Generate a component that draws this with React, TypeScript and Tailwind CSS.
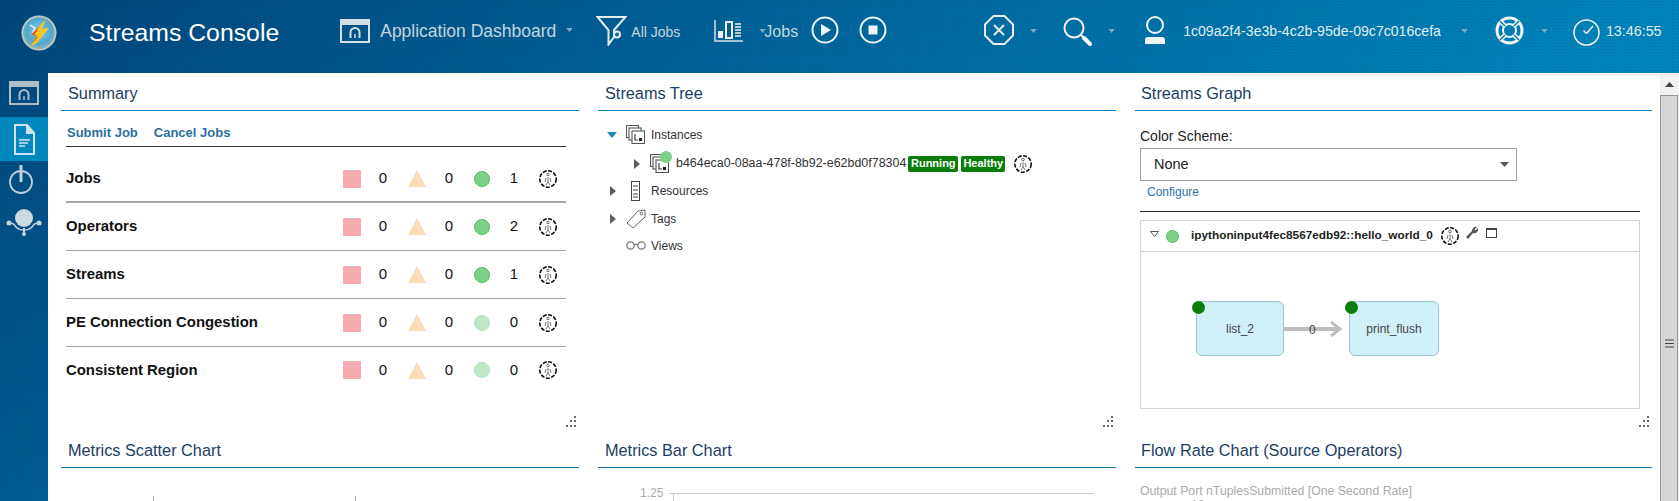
import React from "react";

const Caret = ({ className = "" }: { className?: string }) => (
  <svg width="7" height="4" viewBox="0 0 8 5" className={className}>
    <path d="M0 0H8L4 5Z" fill="#7fa9c4" />
  </svg>
);

const DashIcon = ({ w = 30, h = 24, c = "#d5e0e6" }: { w?: number; h?: number; c?: string }) => (
  <svg width={w} height={h} viewBox="0 0 30 24" fill="none">
    <rect x="1" y="1" width="28" height="22" stroke={c} strokeWidth="2" />
    <rect x="1" y="1" width="28" height="5" fill={c} />
    <path d="M10.5 19v-5.5a4.5 4.5 0 0 1 9 0V19" stroke={c} strokeWidth="2" />
    <path d="M15 19v-4" stroke={c} strokeWidth="1.5" />
  </svg>
);

const Logo = () => (
  <svg width="36" height="36" viewBox="0 0 36 36">
    <defs>
      <radialGradient id="lg" cx="50%" cy="45%" r="55%">
        <stop offset="0%" stopColor="#7fd0ee" />
        <stop offset="65%" stopColor="#4fa8cf" />
        <stop offset="100%" stopColor="#a9b8ae" />
      </radialGradient>
    </defs>
    <circle cx="18" cy="18" r="17.5" fill="url(#lg)" />
    <circle cx="18" cy="18" r="16.5" fill="none" stroke="#c3c9b8" strokeWidth="1.5" />
    <path d="M9 10l5 3-2 4 5 1-2 5" stroke="#dff1f7" strokeWidth="1.5" fill="none" />
    <path d="M25 4L10 20l6 0-6 11 6-3 12-15-7 1z" fill="#f7c81f" />
    <path d="M19 10L10 20l6 0-5 9 6-7-4-1z" fill="#ee5a24" />
  </svg>
);

const FilterIcon = () => (
  <svg width="31" height="31" viewBox="0 0 31 31" fill="none" stroke="#e6eef2" strokeWidth="2">
    <path d="M1.5 2h28L18 15v7l-5.500 7.500V15z" />
    <circle cx="21" cy="19.500" r="3" fill="#0a6c9c" />
  </svg>
);

const BarsIcon = () => (
  <svg width="29" height="22" viewBox="0 0 29 22">
    <path d="M1 0v21h28" stroke="#d5e0e6" strokeWidth="1.500" fill="none" />
    <rect x="4" y="11" width="5" height="7" fill="#eef4f7" />
    <rect x="12" y="2" width="6" height="16" fill="none" stroke="#eef4f7" strokeWidth="2" />
    <path d="M21 4h6M21 7h6M21 10h6M21 13h6M21 16h6" stroke="#b7cbd6" strokeWidth="2" />
  </svg>
);

const PlayIcon = () => (
  <svg width="28" height="28" viewBox="0 0 28 28" fill="none">
    <circle cx="14" cy="14" r="12.500" stroke="#eef4f7" strokeWidth="2" />
    <path d="M10 8l10 6-10 6z" fill="#eef4f7" />
  </svg>
);

const StopIcon = () => (
  <svg width="28" height="28" viewBox="0 0 28 28" fill="none">
    <circle cx="14" cy="14" r="12.500" stroke="#eef4f7" strokeWidth="2" />
    <rect x="9.500" y="9.500" width="9" height="9" fill="#eef4f7" />
  </svg>
);

const OctIcon = () => (
  <svg width="30" height="30" viewBox="0 0 30 30" fill="none" stroke="#e6eef2" strokeWidth="2">
    <path d="M9.500 1h11L29 9.500v11L20.500 29h-11L1 20.500v-11z" />
    <path d="M10 10l10 10M20 10L10 20" />
  </svg>
);

const SearchIcon = () => (
  <svg width="30" height="29" viewBox="0 0 30 29" fill="none" stroke="#f0f5f7">
    <circle cx="11" cy="11" r="9.500" strokeWidth="2" />
    <path d="M18 18l3 3" strokeWidth="2" />
    <path d="M21 21l6 6" strokeWidth="4" strokeLinecap="round" />
  </svg>
);

const UserIcon = () => (
  <svg width="24" height="29" viewBox="0 0 24 29" fill="none">
    <circle cx="12" cy="9" r="8" stroke="#f0f5f7" strokeWidth="2" />
    <path d="M2 28v-4a3 3 0 0 1 3-3h14a3 3 0 0 1 3 3v4z" fill="#f0f5f7" />
  </svg>
);

const LifeIcon = () => (
  <svg width="29" height="29" viewBox="0 0 29 29" fill="none">
    <circle cx="14.500" cy="14.500" r="12.500" strokeWidth="3" stroke="#f0f5f7" />
    <circle cx="14.500" cy="14.500" r="6.500" strokeWidth="2" stroke="#f0f5f7" />
    <path d="M5.500 5.500l4.500 4.500M23.500 5.500L19 10M5.500 23.500L10 19M23.500 23.500L19 19" strokeWidth="4.500" stroke="#f0f5f7" />
    <path d="M5 5l5 5M24 5l-5 5M5 24l5-5M24 24l-5-5" strokeWidth="1.500" stroke="#0a80b2" />
  </svg>
);

const ClockIcon = () => (
  <svg width="27" height="27" viewBox="0 0 27 27" fill="none" stroke="#e6eef2" strokeWidth="1.600">
    <circle cx="13.500" cy="13.500" r="12.500" />
    <path d="M13.500 14.500l-3-3M13.500 14.500L20 7" />
  </svg>
);

const DocIcon = () => (
  <svg width="21" height="31" viewBox="0 0 21 31" fill="none" stroke="#cfe3ee" strokeWidth="2">
    <path d="M1 1h12l7 8v21H1z" />
    <path d="M13 1v8h7" fill="#cfe3ee" />
    <path d="M5 16h11M5 19h9M5 22h6" strokeWidth="1.500" />
  </svg>
);

const PowerIcon = () => (
  <svg width="24" height="29" viewBox="0 0 24 29" fill="none" stroke="#bcced8">
    <circle cx="12" cy="17" r="11" strokeWidth="1.800" />
    <path d="M12 0v17" strokeWidth="3" />
  </svg>
);

const OrbIcon = () => (
  <svg width="36" height="28" viewBox="0 0 36 28" fill="none">
    <circle cx="18" cy="10" r="9" fill="#cdd9e0" />
    <path d="M3 15c4 0 5 1 7 4 2 2 5 3 8 3s6-1 8-3c2-3 3-4 7-4" stroke="#c4d2da" strokeWidth="1.500" />
    <circle cx="3" cy="15" r="2.500" fill="#c4d2da" />
    <circle cx="33" cy="15" r="2.500" fill="#c4d2da" />
    <path d="M18 20v6" stroke="#c4d2da" strokeWidth="2" />
    <circle cx="18" cy="26" r="2" fill="#c4d2da" />
  </svg>
);

const Info = () => (
  <svg width="18" height="18" viewBox="0 0 18 18" fill="none" className="shrink-0">
    <circle cx="9" cy="9" r="8.200" stroke="#111" strokeWidth="1.600" strokeDasharray="4 1.500" />
    <circle cx="9" cy="4.500" r="1.300" stroke="#444" strokeWidth=".8" />
    <path d="M9 7v4.500M7 8l-1 4M11 8l1 4M9 11.500l-2 3.500M9 11.500l2 3.500" stroke="#666" strokeWidth=".9" />
  </svg>
);

const Sq = () => <div className="w-[18px] h-[18px] bg-[#f5abb0]" />;
const Tri = () => (
  <svg width="18" height="17" viewBox="0 0 18 17">
    <path d="M9 0L18 17H0Z" fill="#fcdcb8" />
  </svg>
);
const Dot = ({ on }: { on: boolean }) => (
  <div
    className={
      on
        ? "w-4 h-4 rounded-full bg-[#7ed189] border border-[#4dbb62]"
        : "w-4 h-4 rounded-full bg-[#c0e8c8] border border-[#b0e0bb]"
    }
  />
);

const StackIcon = () => (
  <svg width="19" height="19" viewBox="0 0 19 19" fill="#fff" stroke="#555" strokeWidth="1.100">
    <rect x="0.500" y="0.500" width="12" height="12" />
    <rect x="3" y="3" width="12" height="12" />
    <rect x="6" y="6" width="12.500" height="12.500" />
    <path d="M9 9v6h3" stroke="#333" fill="none" />
    <rect x="13" y="13" width="3" height="3" fill="#222" stroke="none" />
  </svg>
);

const Tri2 = ({ c = "#5d5d5d" }: { c?: string }) => (
  <svg width="6" height="10" viewBox="0 0 6 10">
    <path d="M0 0L6 5L0 10Z" fill={c} />
  </svg>
);

const Grip = () => (
  <svg width="12" height="12" viewBox="0 0 12 12" fill="#666" className="absolute right-[2px] bottom-[2px]">
    <rect x="9" y="0" width="2" height="2" />
    <rect x="5" y="4" width="2" height="2" />
    <rect x="9" y="4" width="2" height="2" />
    <rect x="1" y="9" width="2" height="2" />
    <rect x="5" y="9" width="2" height="2" />
    <rect x="9" y="9" width="2" height="2" />
  </svg>
);

const Panel = ({ title, line = "border-[#0085c0]", pad = "pl-[7px]", children, grip = true }: { title: string; line?: string; pad?: string; children?: React.ReactNode; grip?: boolean }) => (
  <section className="relative h-[357px]">
    <div className={`h-[38px] border-b flex items-center pt-[3px] text-[16.300px] text-[#1b3d63] ${pad} ${line}`}>{title}</div>
    {children}
    {grip && <Grip />}
  </section>
);

const rows = [
  { name: "Jobs", n: 1, on: true, cls: "h-[56px] pt-[9px] border-b-2 border-[#ada6a6]" },
  { name: "Operators", n: 2, on: true, cls: "h-[48px] border-b border-[#a3aea3]" },
  { name: "Streams", n: 1, on: true, cls: "h-[48px] border-b border-[#a3aea3]" },
  { name: "PE Connection Congestion", n: 0, on: false, cls: "h-[48px] border-b border-[#a3aea3]" },
  { name: "Consistent Region", n: 0, on: false, cls: "h-[46px]" },
];

const Node = ({ label, className }: { label: string; className: string }) => (
  <div className={`absolute h-[55px] rounded-[6px] border border-[#9cc4d0] bg-[#d0f1f8] flex items-center justify-center text-[12px] text-[#444] ${className}`}>
    <span className="absolute -left-[5px] -top-px w-[13px] h-[13px] rounded-full bg-[#0a7d0a]" />
    {label}
  </div>
);

export default function App() {
  return (
    <div className="w-[1679px] h-[501px] overflow-hidden flex flex-col font-['Liberation_Sans',Arial,sans-serif] bg-[radial-gradient(rgba(0,0,0,0.10)_1px,transparent_1px),linear-gradient(140deg,#00457b_0%,#0083b9_73%,#0088bf_100%)] [background-size:3px_3px,100%_100%]">
      <header className="h-[73px] shrink-0 flex items-center text-[#c3d5df]">
        <div className="ml-[21px] -mt-[7px]"><Logo /></div>
        <div className="ml-[32px] -mt-[8px] text-[24.800px] text-white whitespace-nowrap">Streams Console</div>
        <div className="ml-[61px] -mt-[11px]"><DashIcon /></div>
        <div className="ml-[10px] -mt-[11px] text-[17.500px] whitespace-nowrap">Application Dashboard</div>
        <Caret className="ml-[10px] -mt-[13px]" />
        <div className="ml-[23px] -mt-[13px]"><FilterIcon /></div>
        <div className="ml-[4px] -mt-[9px] text-[14px] whitespace-nowrap">All Jobs</div>
        <div className="ml-[34px] -mt-[11px]"><BarsIcon /></div>
        <Caret className="ml-[16px] -mt-[11px]" />
        <div className="-ml-[2px] -mt-[9px] text-[16px] whitespace-nowrap">Jobs</div>
        <div className="ml-[13px] -mt-[13px]"><PlayIcon /></div>
        <div className="ml-[20px] -mt-[13px]"><StopIcon /></div>
        <div className="ml-[97px] -mt-[13px]"><OctIcon /></div>
        <Caret className="ml-[16px] -mt-[11px]" />
        <div className="ml-[26px] -mt-[11px]"><SearchIcon /></div>
        <Caret className="ml-[15px] -mt-[11px]" />
        <div className="ml-[28px] -mt-[13px]"><UserIcon /></div>
        <div className="ml-[16px] -mt-[10px] text-[14.100px] text-[#e3edf2] whitespace-nowrap">1c09a2f4-3e3b-4c2b-95de-09c7c016cefa</div>
        <Caret className="ml-[20px] -mt-[11px]" />
        <div className="ml-[27px] -mt-[13px]"><LifeIcon /></div>
        <Caret className="ml-[17px] -mt-[11px]" />
        <div className="ml-[25px] -mt-[9px]"><ClockIcon /></div>
        <div className="ml-[6px] -mt-[9px] text-[14.300px] text-[#e3edf2] whitespace-nowrap">13:46:55</div>
      </header>

      <div className="flex-1 min-h-0 flex">
        <nav className="w-[48px] shrink-0 flex flex-col items-center">
          <div className="h-[44px] w-full flex items-center justify-center pb-[5px]"><DashIcon c="#aebcc4" /></div>
          <div className="h-[44px] w-full flex items-center justify-center bg-[#0087bd]"><DocIcon /></div>
          <div className="h-[33px] w-full flex items-end justify-center pr-[6px]"><PowerIcon /></div>
          <div className="h-[56px] w-full flex items-center justify-center pr-[1px]"><OrbIcon /></div>
        </nav>

        <main className="w-[1612px] shrink-0 bg-white pl-[13px] pr-[8px] overflow-hidden grid grid-cols-[518px_518px_517px] gap-x-[19px] content-start">
          <Panel title="Summary">
            <div className="pl-[5px] pr-[13px]">
              <div className="h-[36px] pl-px pt-[8px] flex items-center gap-[16px] border-b border-[#333] text-[13px] font-bold text-[#2c6f9e]">
                <span>Submit Job</span>
                <span>Cancel Jobs</span>
              </div>
              {rows.map((r) => (
                <div key={r.name} className={`grid grid-cols-[277px_18px_44px_24px_40px_26px_38px_30px] items-center justify-items-center text-[15px] text-[#111] ${r.cls}`}>
                  <div className="justify-self-start font-bold whitespace-nowrap text-[14.900px]">{r.name}</div>
                  <Sq />
                  <span>0</span>
                  <Tri />
                  <span>0</span>
                  <Dot on={r.on} />
                  <span>{r.n}</span>
                  <Info />
                </div>
              ))}
            </div>
          </Panel>

          <Panel title="Streams Tree">
            <div className="pt-[10px] text-[12px] text-[#333]">
              <div className="h-[27px] flex items-center pl-[9px]">
                <svg width="10" height="6" viewBox="0 0 10 6"><path d="M0 0H10L5 6Z" fill="#1f86b5" /></svg>
                <span className="ml-[9px]"><StackIcon /></span>
                <span className="ml-[6px]">Instances</span>
              </div>
              <div className="mt-[2px] h-[27px] flex items-center pl-[36px]">
                <Tri2 />
                <span className="relative ml-[10px]">
                  <StackIcon />
                  <span className="absolute -top-[3px] left-[10px] w-[12px] h-[12px] rounded-full bg-[#7ed189]" />
                </span>
                <span className="ml-[7px] text-[12.450px] whitespace-nowrap">b464eca0-08aa-478f-8b92-e62bd0f78304</span>
                <span className="ml-[2px] w-[50px] h-[16px] rounded-[2px] bg-[#0a7d0a] text-white font-bold text-[11px] flex items-center justify-center">Running</span>
                <span className="ml-[3px] w-[44px] h-[16px] rounded-[2px] bg-[#0a7d0a] text-white font-bold text-[11px] flex items-center justify-center">Healthy</span>
                <span className="ml-[9px]"><Info /></span>
              </div>
              <div className="h-[27px] flex items-center pl-[12px]">
                <Tri2 />
                <svg width="9" height="20" viewBox="0 0 9 20" fill="none" stroke="#444" className="ml-[15px]">
                  <rect x="0.500" y="0.500" width="8" height="19" />
                  <path d="M2 5h5M2 9h5M2 13h5M2 16h5" />
                </svg>
                <span className="ml-[11px]">Resources</span>
              </div>
              <div className="mt-px h-[27px] flex items-center pl-[12px]">
                <Tri2 />
                <svg width="20" height="20" viewBox="0 0 20 20" fill="none" stroke="#666" className="ml-[10px]">
                  <path d="M1 14L12 2l7-1 0 7L7 19z" />
                  <circle cx="15.500" cy="4.500" r="1.300" />
                </svg>
                <span className="ml-[5px]">Tags</span>
              </div>
              <div className="h-[27px] flex items-center pl-[28px]">
                <svg width="20" height="9" viewBox="0 0 20 9" fill="none" stroke="#777" strokeWidth="1.300">
                  <circle cx="4.500" cy="4.500" r="3.700" />
                  <circle cx="15.500" cy="4.500" r="3.700" />
                  <path d="M8 3.500h4" />
                </svg>
                <span className="ml-[5px]">Views</span>
              </div>
            </div>
          </Panel>

          <Panel title="Streams Graph" pad="pl-[6px]">
            <div className="pl-[5px] pr-[12px]">
              <div className="mt-[15px] h-[20px] flex items-center text-[14px] text-[#222]">Color Scheme:</div>
              <div className="mt-[2px] w-[377px] h-[33px] border border-[#98a69a] flex items-center justify-between pl-[13px] pr-[7px] text-[14.500px] text-[#222]">
                <span>None</span>
                <svg width="9" height="5" viewBox="0 0 9 5"><path d="M0 0H9L4.500 5Z" fill="#555" /></svg>
              </div>
              <div className="mt-[2px] h-[17px] pl-[7px] flex items-center text-[12px] text-[#2c74aa]">Configure</div>
              <div className="mt-[11px] border-b border-[#222]" />
              <div className="mt-[8px] h-[189px] border border-[#cfd3cf]">
                <div className="h-[31px] border-b border-[#cfd3cf] flex items-center text-[11.800px] font-bold text-[#222]">
                  <svg width="9" height="6" viewBox="0 0 9 6" fill="none" stroke="#555" className="ml-[9px] -mt-[5px]"><path d="M.5.500h8L4.500 5.500z" /></svg>
                  <span className="ml-[7px] w-[13px] h-[13px] rounded-full bg-[#7ed189] border border-[#4dbb62]" />
                  <span className="ml-[12px] whitespace-nowrap">ipythoninput4fec8567edb92::hello_world_0</span>
                  <span className="ml-[8px] -mt-[1px]"><Info /></span>
                  <svg width="14" height="14" viewBox="0 0 14 14" className="ml-[6px] -mt-[7px]">
                    <path d="M1 11l6-6a4 4 0 0 1 5-4L9.500 3.500l1 1L13 2a4 4 0 0 1-5 5l-5 6z" fill="#555" />
                  </svg>
                  <svg width="11" height="10" viewBox="0 0 11 10" fill="none" stroke="#444" className="ml-[7px] -mt-[6px]">
                    <rect x=".5" y=".5" width="10" height="9" />
                    <path d="M0 1.500h11" />
                  </svg>
                </div>
                <div className="relative h-[157px]">
                  <Node label="list_2" className="left-[55px] top-[49px] w-[88px]" />
                  <svg width="62" height="16" viewBox="0 0 62 16" className="absolute left-[142px] top-[69px]" fill="none" stroke="#c0bcc2">
                    <path d="M0 8h56" strokeWidth="4" />
                    <path d="M48 1l9 7-9 7" strokeWidth="3" />
                  </svg>
                  <span className="absolute left-[168px] top-[69px] text-[12px] font-normal text-[#444]">0</span>
                  <Node label="print_flush" className="left-[208px] top-[49px] w-[90px]" />
                </div>
              </div>
            </div>
          </Panel>

          <Panel title="Metrics Scatter Chart" line="border-[#1a75a5]" grip={false}>
            <div className="mt-[28px] flex">
              <span className="ml-[92px] w-px h-[5px] bg-[#aaa]" />
              <span className="ml-[201px] w-px h-[5px] bg-[#aaa]" />
            </div>
          </Panel>

          <Panel title="Metrics Bar Chart" line="border-[#1a75a5]" grip={false}>
            <div className="mt-[16px] ml-[42px] flex items-center text-[12px] text-[#aaa]">
              <span>1.25</span>
              <span className="relative ml-[6px] w-[425px] h-px bg-[#ccc]">
                <span className="absolute left-[4px] top-0 w-px h-[12px] bg-[#ccc]" />
              </span>
            </div>
          </Panel>

          <Panel title="Flow Rate Chart (Source Operators)" line="border-[#1a75a5]" pad="pl-[6px]" grip={false}>
            <div className="pl-[5px] mt-[16px] text-[12.250px] leading-[14px] text-[#aaa]">
              <div>Output Port nTuplesSubmitted [One Second Rate]</div>
              <div className="ml-[51px]">10</div>
            </div>
          </Panel>
        </main>

        <aside className="w-[19px] shrink-0 bg-[#f2f2f2] overflow-hidden">
          <div className="h-[22px] flex items-center justify-center">
            <svg width="9" height="5" viewBox="0 0 9 5"><path d="M4.500 0L9 5H0Z" fill="#444" /></svg>
          </div>
          <div className="h-[496px] mr-px border border-[#99939b] bg-[#d6d6d8] flex items-center justify-center">
            <svg width="9" height="9" viewBox="0 0 9 9" stroke="#444"><path d="M0 1h9M0 4.500h9M0 8h9" /></svg>
          </div>
        </aside>
      </div>
    </div>
  );
}
